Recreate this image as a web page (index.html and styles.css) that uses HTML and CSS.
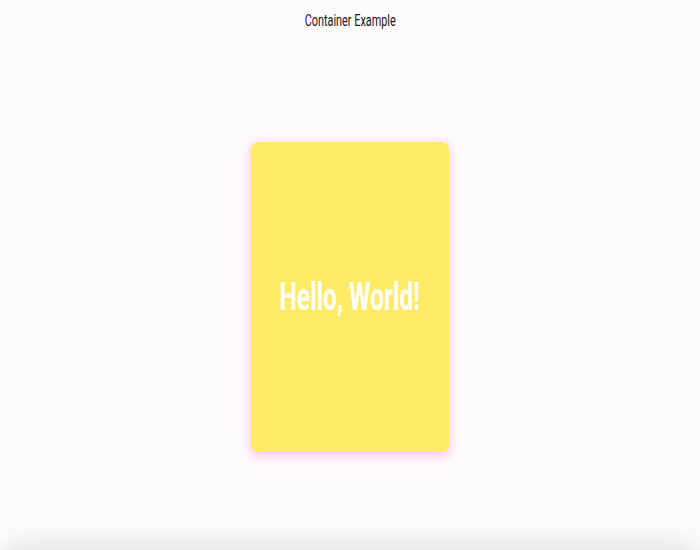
FILE: index.html
```html
<!DOCTYPE html>
<html>
<head>
<meta charset="utf-8">
<link rel="stylesheet" href="styles.css">
</head>
<body>
<div class="app">
  <header class="appbar"><span class="title">Container Example</span></header>
  <main class="content">
    <div class="card"><span class="hello">Hello, World!</span></div>
  </main>
  <div class="bottom-shadow"></div>
</div>
</body>
</html>
```
FILE: styles.css
```css
html, body {
  margin: 0;
  padding: 0;
  background: #fdfafd;
  font-family: Roboto, "Liberation Sans", sans-serif;
  overflow: hidden;
}
.app {
  width: 700px;
  height: 550px;
  display: flex;
  flex-direction: column;
  position: relative;
  overflow: hidden;
}
.appbar {
  height: 44px;
  display: flex;
  justify-content: center;
  align-items: center;
  padding-bottom: 4px;
  box-sizing: border-box;
}
.title {
  font-size: 17px;
  color: #1d1b20;
  display: inline-block;
  transform: scaleX(0.64);
}
.content {
  flex: 1;
  display: flex;
  justify-content: center;
  align-items: center;
}
.card {
  width: 198px;
  height: 310px;
  background: #ffeb66;
  border-radius: 7px;
  box-shadow: 0 3px 9px 2px rgba(243, 165, 215, 0.5);
  display: flex;
  justify-content: center;
  align-items: center;
}
.hello {
  font-size: 38px;
  font-weight: 700;
  color: #ffffff;
  display: inline-block;
  transform: scaleX(0.645);
  white-space: nowrap;
}
.bottom-shadow {
  position: absolute;
  left: 0;
  right: 0;
  top: 552px;
  height: 60px;
  background: #fdfafd;
  border-radius: 30px;
  box-shadow: 0 -6px 20px 6px rgba(0, 0, 0, 0.08);
}
```
